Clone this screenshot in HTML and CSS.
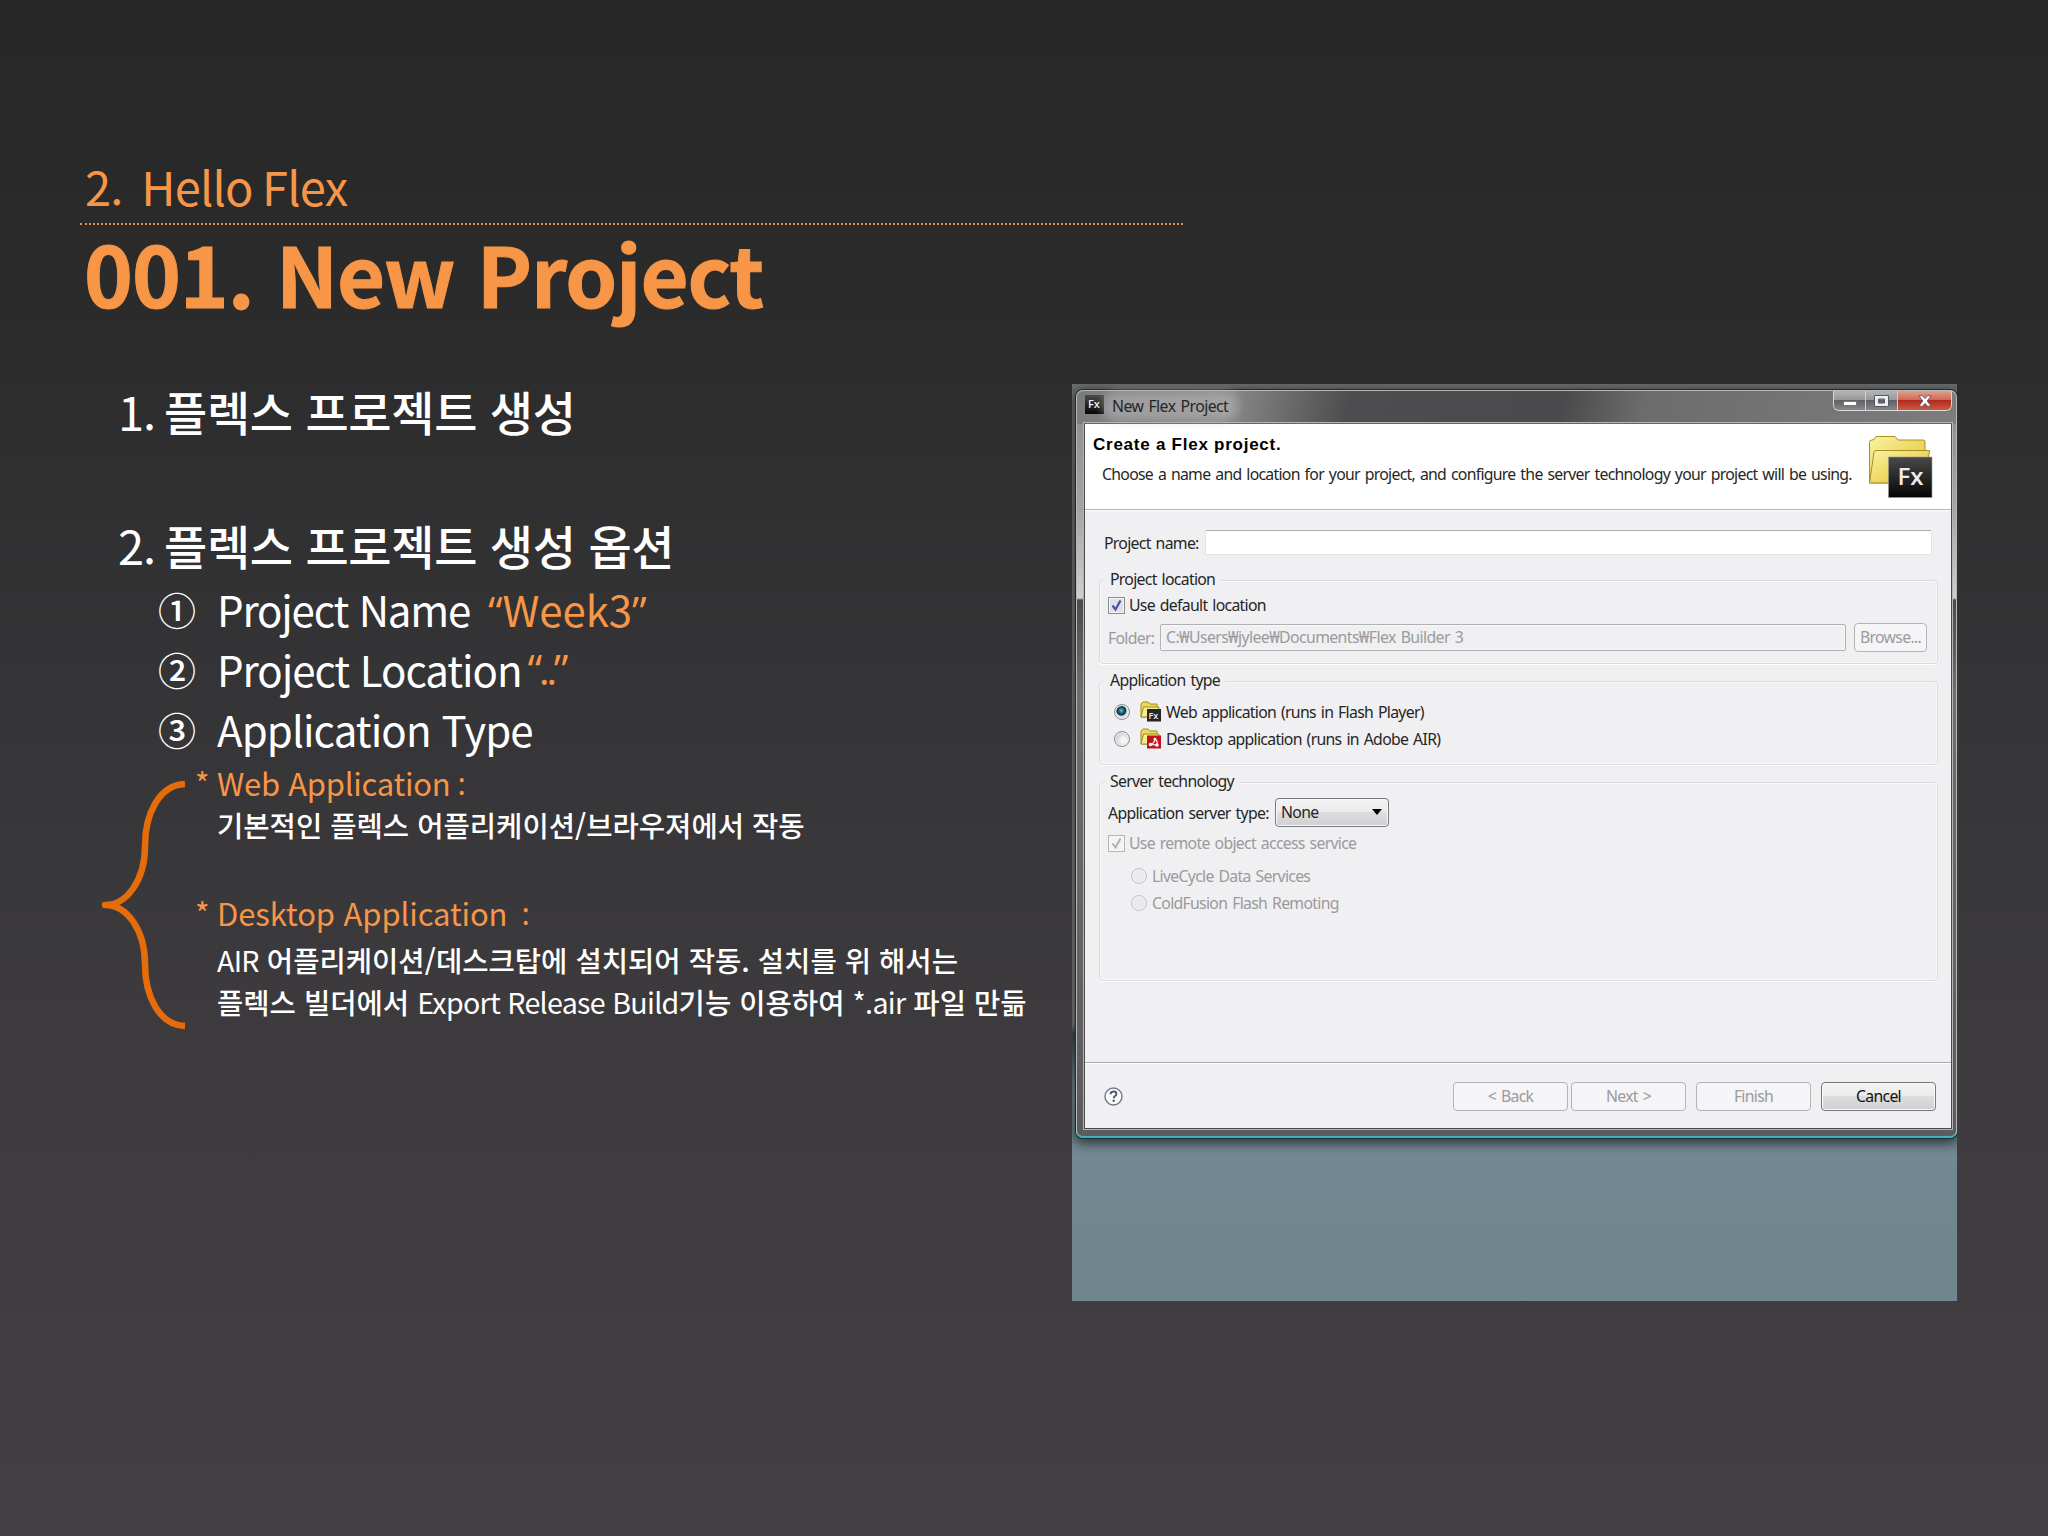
FILE: index.html
```html
<!DOCTYPE html>
<html lang="ko">
<head>
  <meta charset="UTF-8">
  <title>001. New Project</title>
  <link rel="stylesheet" href="styles.css">
</head>
<body>

  <header class="slide-header">
    <p class="chapter">2.&nbsp; Hello Flex</p>
    <h1>001. New Project</h1>
  </header>

  <main class="content">
    <section class="outline">
      <h2><span class="no">1.</span>플렉스 프로젝트 생성</h2>
      <h2><span class="no">2.</span>플렉스 프로젝트 생성 옵션</h2>
      <ul class="options">
        <li><span class="num">①</span><span class="name">Project Name</span><em class="week"><span class="quote">“</span>Week3<span class="quote">”</span></em></li>
        <li><span class="num">②</span><span class="loc">Project Location</span><em class="dots">“..”</em></li>
        <li><span class="num">③</span><span class="type">Application Type</span></li>
      </ul>

      <div class="types">
        <svg class="brace" width="90" height="250" viewBox="0 0 90 250">
          <path d="M84 4 C58 5 44 34 44 66 C44 100 26 125 4 125 C26 125 44 150 44 184 C44 216 58 245 84 246" fill="none" stroke="#e46c0a" stroke-width="6.5" stroke-linejoin="round"/>
        </svg>
        <div class="notes">
          <h3><span class="star">*</span>Web Application<span class="colon">:</span></h3>
          <p>기본적인 플렉스 어플리케이션/브라우져에서 작동</p>
          <h3 class="second"><span class="star">*</span>Desktop Application<span class="colon wide">:</span></h3>
          <p><span class="en">AIR</span> 어플리케이션/데스크탑에 설치되어 작동. 설치를 위 해서는</p>
          <p>플렉스 빌더에서 <span class="en">Export Release Build</span>기능 이용하여 <span class="en">*.air</span> 파일 만듦</p>
        </div>
      </div>
    </section>

    <section class="desktop">
      <div class="window">
        <div class="titlebar">
          <svg class="app-icon" width="19" height="19" viewBox="0 0 19 19">
            <defs>
              <linearGradient id="tile" x1="0" y1="0" x2="0" y2="1">
                <stop offset="0" stop-color="#4a4a4a"/>
                <stop offset="1" stop-color="#050505"/>
              </linearGradient>
              <linearGradient id="folder" x1="0" y1="0" x2="1" y2="1">
                <stop offset="0" stop-color="#fbf3a0"/>
                <stop offset="1" stop-color="#dfbf2c"/>
              </linearGradient>
            </defs>
            <rect width="19" height="19" fill="url(#tile)"/>
            <text x="3" y="13" class="fx-text" font-size="11">Fx</text>
          </svg>
          <span class="caption">New Flex Project</span>
          <div class="controls">
            <span class="ctl"><svg class="min" width="14" height="5" viewBox="0 0 14 5"><rect x=".5" y=".5" width="13" height="4" fill="#fff" stroke="#777"/></svg></span>
            <span class="ctl"><svg width="15" height="12" viewBox="0 0 15 12"><path d="M.5.5H14.500V11.500H.5Z M4.500 4V8H10.500V4Z" fill="#eee" fill-rule="evenodd" stroke="#555a66"/></svg></span>
            <span class="ctl close"><svg width="14" height="12" viewBox="0 0 14 12"><path d="M.8.8H4.600L7 3.600 9.400.8H13.200L9.200 6 13.200 11.200H9.400L7 8.400 4.600 11.200H.8L4.800 6Z" fill="#fff" stroke="#5f5560" stroke-width=".9"/></svg></span>
          </div>
        </div>

        <div class="client">
          <div class="banner">
            <div>
              <h4>Create a Flex project.</h4>
              <p>Choose a name and location for your project, and configure the server technology your project will be using.</p>
            </div>
            <svg class="banner-icon" width="66" height="66" viewBox="0 0 66 66">
              <path d="M1.500 48V7.500Q1.500 5 4 5L6 4.500 8 1.500H27L30 5H55Q57 5 57 7V48Z" fill="url(#folder)" stroke="#a88f25"/>
              <path d="M1.500 48 6 17Q6.300 15.500 8 15.500H61.500L57 48Z" fill="url(#folder)" stroke="#a88f25"/>
              <rect x="20.500" y="22" width="43.500" height="40.500" fill="url(#tile)" stroke="#999" stroke-width=".6"/>
              <text x="29.500" y="50" class="fx-text" font-size="24">Fx</text>
            </svg>
          </div>

          <div class="form">
            <div class="row name-row">
              <span class="lbl">Project name:</span>
              <span class="field"></span>
            </div>

            <div class="group location">
              <span class="legend">Project location</span>
              <div class="row">
                <span class="checkbox"><svg width="13" height="13" viewBox="0 0 13 13"><path d="M2.500 6.500 5.500 10.500 10.500 1.500" fill="none" stroke="#4c4f9e" stroke-width="2.200"/></svg></span>
                <span>Use default location</span>
              </div>
              <div class="row folder-row disabled">
                <span class="lbl">Folder:</span>
                <span class="field readonly">C:₩Users₩jylee₩Documents₩Flex Builder 3</span>
                <span class="btn browse">Browse...</span>
              </div>
            </div>

            <div class="group apptype">
              <span class="legend">Application type</span>
              <div class="row radio-row">
                <span class="radio on"></span>
                <svg class="kind" width="21" height="21" viewBox="0 0 21 21">
                  <path d="M1 16V3L3 1H8L10 3H17V16Z" fill="#ecd95a" stroke="#a18b1d"/>
                  <path d="M1 16 3.500 6H19L17 16Z" fill="#f7ec8f" stroke="#a18b1d"/>
                  <rect x="7" y="8" width="14" height="12.500" fill="#262626"/>
                  <text x="8.500" y="17.500" class="fx-text" font-size="9">Fx</text>
                </svg>
                <span>Web application (runs in Flash Player)</span>
              </div>
              <div class="row radio-row">
                <span class="radio"></span>
                <svg class="kind" width="21" height="21" viewBox="0 0 21 21">
                  <path d="M1 16V3L3 1H8L10 3H17V16Z" fill="#ecd95a" stroke="#a18b1d"/>
                  <path d="M1 16 3.500 6H19L17 16Z" fill="#f7ec8f" stroke="#a18b1d"/>
                  <rect x="7" y="7.500" width="14" height="13" fill="#c3121c"/>
                  <path d="M10.500 16.500Q14.500 15.500 14.800 11.200Q18 12.500 17 17Z" fill="none" stroke="#fff" stroke-width="1.200"/>
                  <circle cx="10.500" cy="16.500" r="1.800" fill="#fff"/>
                  <circle cx="17" cy="17" r="1.700" fill="#fff"/>
                  <circle cx="15" cy="11.200" r="1.400" fill="#fff"/>
                </svg>
                <span>Desktop application (runs in Adobe AIR)</span>
              </div>
            </div>

            <div class="group server">
              <span class="legend">Server technology</span>
              <div class="row select-row">
                <span class="lbl">Application server type:</span>
                <span class="select">None<svg width="10" height="6" viewBox="0 0 10 6"><path d="M0 0H10L5 6Z" fill="#000"/></svg></span>
              </div>
              <div class="row disabled">
                <span class="checkbox off"><svg width="13" height="13" viewBox="0 0 13 13"><path d="M2.500 6.500 5.500 10.500 10.500 1.500" fill="none" stroke="#b0b0b4" stroke-width="2"/></svg></span>
                <span>Use remote object access service</span>
              </div>
              <div class="services disabled">
                <div class="row"><span class="radio off"></span><span>LiveCycle Data Services</span></div>
                <div class="row"><span class="radio off"></span><span>ColdFusion Flash Remoting</span></div>
              </div>
            </div>
          </div>

          <div class="footer">
            <svg class="help" width="19" height="19" viewBox="0 0 19 19">
              <circle cx="9.500" cy="9.500" r="8.500" fill="#fbfcfe" stroke="#707a8c" stroke-width="1.400"/>
              <path d="M6.500 7.300Q6.700 4.500 9.600 4.500 12.400 4.500 12.400 6.900 12.400 8.200 10.900 9.100 9.700 9.900 9.700 11.300" fill="none" stroke="#4f5a70" stroke-width="1.900"/>
              <circle cx="9.700" cy="13.800" r="1.200" fill="#4f5a70"/>
            </svg>
            <span class="btn">&lt; Back</span>
            <span class="btn next">Next &gt;</span>
            <span class="btn finish">Finish</span>
            <span class="btn cancel">Cancel</span>
          </div>
        </div>
      </div>
    </section>
  </main>

</body>
</html>
```

FILE: styles.css
```css
* {
  box-sizing: border-box;
}

body {
  margin: 0;
  width: 2048px;
  height: 1536px;
  overflow: hidden;
  background: linear-gradient(#272727 0%, #2b2b2c 20%, #343335 43%, #3c3a3d 65%, #424042 100%);
  font-family: "Noto Sans CJK KR", sans-serif;
  color: #fff;
  white-space: nowrap;
}

h1, h2, h3, h4, p, ul {
  margin: 0;
  padding: 0;
}

.slide-header {
  padding: 156px 0 0 80px;
  color: #f79646;
}

.chapter {
  width: 1103px;
  height: 69px;
  padding-left: 5px;
  border-bottom: 2px dotted #e08f4a;
  font-size: 47px;
  line-height: 60px;
  letter-spacing: -0.8px;
  word-spacing: -3px;
}

h1 {
  padding: 2px 0 0 4px;
  font-size: 83px;
  line-height: 91px;
  letter-spacing: -1.05px;
  -webkit-text-stroke: 1px #f79646;
}

.content {
  display: flex;
  align-items: flex-start;
  padding-top: 57px;
}

.outline {
  width: 1072px;
  padding: 2px 0 0 118px;
}

h2 {
  display: flex;
  margin-bottom: 67px;
  font-size: 47px;
  font-weight: 500;
  line-height: 67px;
  letter-spacing: -0.35px;
}

h2 + h2 {
  margin-bottom: 1px;
}

.no {
  width: 46px;
  font-weight: 400;
  letter-spacing: -1px;
}

.options {
  list-style: none;
  font-size: 42px;
  line-height: 60px;
}

.options li {
  display: flex;
  height: 60px;
  padding-left: 40px;
}

.options em {
  color: #f79646;
  font-style: normal;
}

.num {
  width: 59px;
  font-size: 38px;
  font-weight: 500;
}

.name {
  letter-spacing: -1.2px;
}

.loc {
  letter-spacing: -1.05px;
}

.type {
  letter-spacing: -0.9px;
}

.week {
  margin-left: 18px;
  letter-spacing: -0.1px;
}

.quote {
  font-family: "Open Sans", sans-serif;
}

.dots {
  margin-left: 6px;
  font-family: "Open Sans", sans-serif;
  letter-spacing: -3.5px;
}

.types {
  display: flex;
  margin: 3px 0 0 -17px;
}

.brace {
  margin-top: 18px;
}

.notes {
  padding-left: 4px;
  font-size: 28.6px;
  font-weight: 500;
  line-height: 42px;
}

.notes p {
  padding-left: 22px;
}

.en {
  font-weight: 400;
  letter-spacing: -0.7px;
}

h3 {
  display: flex;
  color: #f79646;
  font-size: 31px;
  font-weight: 400;
  line-height: 42px;
  letter-spacing: -0.25px;
}

h3.second {
  margin: 46px 0 5px;
  letter-spacing: -0.1px;
}

.star {
  width: 22px;
}

.colon {
  margin-left: 7px;
  font-family: "Noto Sans", sans-serif;
}

.colon.wide {
  margin-left: 14px;
}

/* dialog */
.desktop {
  width: 885px;
  height: 917px;
  margin-top: 9px;
  padding: 6px 0 0 4px;
  overflow: hidden;
  background: linear-gradient(#6d6f70 0, #828282 640px, #3c4347 650px, #758993 700px, #758993 775px, #728693 785px, #72868f 830px, #70858e 100%);
  font-family: "Noto Sans", sans-serif;
  font-size: 15.8px;
  line-height: 22px;
  letter-spacing: -0.7px;
  word-spacing: 1.5px;
  color: #262626;
}

.window {
  width: 881px;
  height: 748px;
  padding: 0 4px 0 7px;
  border: 1px solid #b9b9b9;
  border-bottom: 2px solid #3fb0c2;
  border-radius: 7px;
  background:
    linear-gradient(100deg, #7c7c7d 0, #8a8a8a 150px, #4d4c4e 270px, #4a494b 480px, #6c6c6d 560px, #7d7d7e 100%) 0 0 / 100% 33px no-repeat,
    linear-gradient(#8a8a8a 0, #a5a5a5 120px, #cfcfcf 207px, #4c4c4c 209px, #6e6e70 300px, #5c5c5e 100%);
  box-shadow: 0 0 0 1px #222a2c, 0 3px 12px 3px rgba(25, 35, 35, .75);
}

.titlebar {
  display: flex;
  height: 32px;
}

.app-icon {
  margin: 4px 0 0 1px;
}

.fx-text {
  font-family: "Open Sans", sans-serif;
  font-weight: 600;
  letter-spacing: 0;
  fill: #eee;
}

.caption {
  height: 18px;
  margin: 6px 0 0 4px;
  padding: 0 5px 0 4px;
  border-radius: 9px;
  background: rgba(185, 185, 185, .5);
  box-shadow: 0 0 8px 6px rgba(185, 185, 185, .5);
  line-height: 18px;
  letter-spacing: -0.55px;
}

.controls {
  display: flex;
  height: 20px;
  margin: 0 0 0 auto;
  border: 1px solid #d8d8d8;
  border-top: 0;
  border-radius: 0 0 6px 6px;
  overflow: hidden;
}

.ctl {
  display: flex;
  align-items: center;
  justify-content: center;
  width: 32px;
  border-right: 1px solid #cfcfcf;
  background: linear-gradient(#b5b5b7 0, #98989b 45%, #616064 50%, #88878b 100%);
}

.min {
  margin-top: 6px;
}

.ctl.close {
  width: 53px;
  border-right: 0;
  background: linear-gradient(#e0a08f 0, #cf6a55 45%, #b02a1b 50%, #cf5a44 100%);
}

.client {
  height: 706px;
  border: 1px solid #4a4a4c;
  border-top-color: #666;
  outline: 1px solid #b4b4b6;
  background: #f0eff1;
}

.banner {
  display: flex;
  justify-content: space-between;
  height: 86px;
  padding: 11px 17px 0 8px;
  background: #fff;
  border-bottom: 1px solid #b3b2b4;
}

h4 {
  font: bold 17px/20px "Liberation Sans", sans-serif;
  letter-spacing: 0.75px;
  word-spacing: 0;
  color: #000;
}

.banner p {
  margin: 8px 0 0 9px;
  letter-spacing: -0.72px;
}

.form {
  height: 552px;
  padding: 19px 13px 0 14px;
  border-top: 1px solid #fff;
}

.row {
  display: flex;
  align-items: center;
}

.disabled {
  color: #9b9a9d;
}

.name-row {
  padding: 0 6px 0 5px;
}

.name-row .lbl {
  width: 101px;
}

.field {
  flex: 1;
  height: 25px;
  padding-left: 5px;
  border: 1px solid #e2e3ea;
  border-top-color: #abadb3;
  border-radius: 2px;
  background: #fff;
}

.readonly {
  height: 27px;
  line-height: 25px;
  border-color: #b0afb2;
  box-shadow: inset 0 0 0 1px #f8f8f9;
  background: #f0eff1;
  letter-spacing: -0.6px;
}

.group {
  padding: 0 10px 0 8px;
  border: 1px solid #dcdcdf;
  border-radius: 4px;
  box-shadow: inset 0 0 0 1px #f9f9fa, 0 1px 0 #fff;
}

.legend {
  display: block;
  width: fit-content;
  margin: -13px 0 0 -3px;
  padding: 0 5px;
  background: #f0eff1;
}

.location {
  height: 84px;
  margin-top: 25px;
}

.location .legend {
  margin-bottom: 4px;
}

.checkbox {
  display: flex;
  align-items: center;
  justify-content: center;
  width: 17px;
  height: 17px;
  margin-right: 4px;
  border: 1px solid #8b8b90;
  background: #dfe1ea;
  box-shadow: inset 0 0 0 1px #f6f6f6;
}

.checkbox.off {
  border-color: #b5b4b8;
  background: #f3f3f4;
}

.folder-row {
  margin-top: 7px;
}

.folder-row .lbl {
  width: 52px;
}

.btn {
  width: 115px;
  height: 29px;
  border: 1px solid #b4b3b6;
  border-radius: 4px;
  background: #f5f4f6;
  color: #9b9a9d;
  line-height: 26px;
  text-align: center;
}

.browse {
  width: 73px;
  margin-left: 8px;
}

.apptype {
  height: 84px;
  margin-top: 17px;
}

.apptype .legend {
  margin-bottom: 7px;
}

.radio-row {
  height: 27px;
  padding-left: 6px;
}

.radio {
  width: 16px;
  height: 16px;
  border: 1px solid #8e8e92;
  border-radius: 50%;
  background: radial-gradient(circle at 60% 60%, #f4f4f4 20%, #c9cacd 70%);
  box-shadow: inset 0 0 0 1px #f2f2f2;
}

.radio.on {
  background: radial-gradient(circle at 45% 40%, #5fc4d8 0, #14586c 3px, #0c2f3e 4.500px, #dcdfe2 5.500px);
}

.radio.off {
  border-color: #c4c3c7;
  background: #eceaed;
}

.kind {
  margin: 0 5px 0 10px;
}

.server {
  height: 199px;
  margin-top: 17px;
}

.server .legend {
  margin-bottom: 6px;
}

.select-row {
  margin-bottom: 5px;
}

.select-row .lbl {
  width: 167px;
}

.select {
  display: flex;
  align-items: center;
  justify-content: space-between;
  width: 114px;
  height: 29px;
  padding: 0 6px 1px 5px;
  border: 1px solid #77767a;
  border-radius: 4px;
  background: linear-gradient(#f3f3f3 0, #ebebeb 48%, #dddddf 50%, #d0d0d2 100%);
  box-shadow: inset 0 0 0 1px #fafafa;
}

.services {
  padding: 8px 0 0 23px;
}

.services .row {
  height: 27px;
}

.services .radio {
  margin-right: 5px;
}

.footer {
  display: flex;
  height: 66px;
  padding: 19px 15px 0 19px;
  border-top: 1px solid #a9a8ab;
  box-shadow: inset 0 1px 0 #fff;
}

.help {
  margin: 5px auto 0 0;
}

.next {
  margin-left: 3px;
}

.finish {
  margin-left: 10px;
}

.cancel {
  margin-left: 10px;
  border-color: #77767a;
  background: linear-gradient(#f3f3f3 0, #ebebeb 48%, #dddddf 50%, #d0d0d2 100%);
  box-shadow: inset 0 0 0 1px #fafafa;
  color: #111;
}
```
